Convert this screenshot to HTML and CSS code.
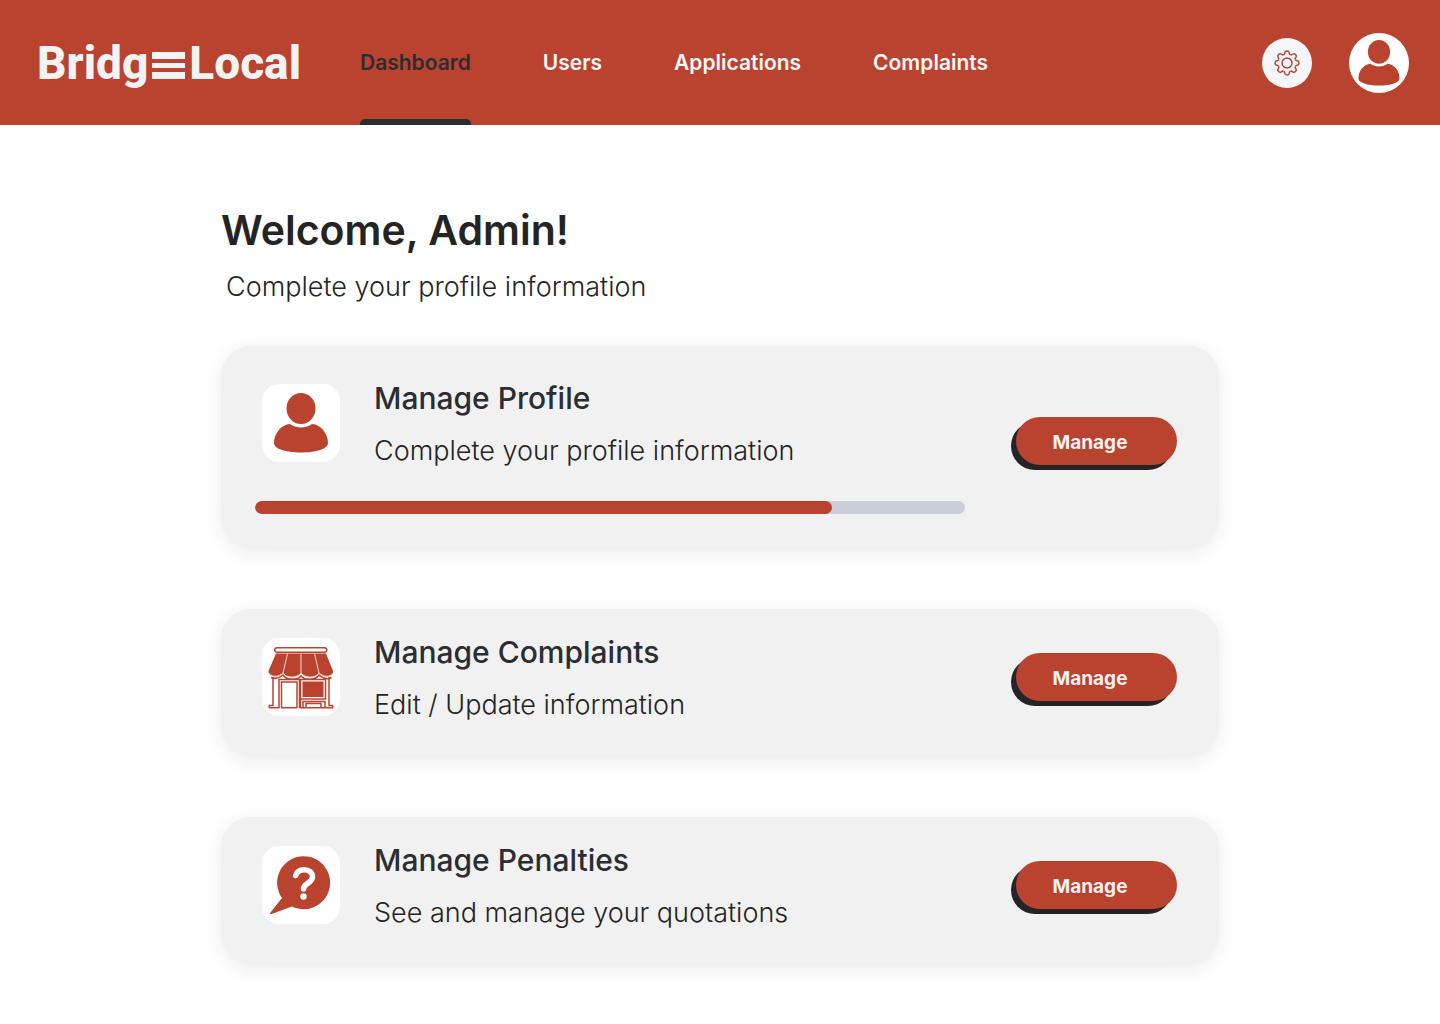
FILE: index.html
```html
<!DOCTYPE html>
<html lang="en">
<head>
  <meta charset="utf-8">
  <meta name="viewport" content="width=device-width, initial-scale=1">
  <title>BridgeLocal – Admin dashboard</title>
  <link rel="stylesheet" href="styles.css">
</head>
<body>
  <svg width="0" height="0" class="sprite" aria-hidden="true">
    <symbol id="person" viewBox="0 0 54 60">
      <ellipse cx="27" cy="15.500" rx="14.500" ry="15.500"/>
      <path d="M16 31C7 31.500 0 41 0 50c0 6 12 9.500 27 9.500S54 56 54 50c0-9-7-18.500-16-19-3 2.300-7 3.500-11 3.500S19 33.300 16 31z"/>
    </symbol>
  </svg>

  <header class="topbar">
    <a class="logo" href="#" aria-label="BridgeLocal home">
      <span>Bridg</span>
      <svg class="logo-bars" viewBox="0 0 33 27" aria-hidden="true"><path d="M0 0h33v7H0zM0 11h33v5H0zM0 20h33v7H0z"/></svg>
      <span>Local</span>
    </a>
    <nav class="nav" aria-label="Main">
      <a class="nav-link active" href="#" aria-current="page">Dashboard</a>
      <a class="nav-link" href="#">Users</a>
      <a class="nav-link" href="#">Applications</a>
      <a class="nav-link" href="#">Complaints</a>
    </nav>
    <div class="actions">
      <button class="settings" type="button" aria-label="Settings">
        <svg viewBox="-13 -13 26 26" aria-hidden="true">
          <circle r="5"/>
          <path id="tooth" d="M-3.440-8.310C-2.100-8.800-2.300-9.600-2.200-10.500Q-2-12 0-12T2.200-10.500C2.300-9.600 2.100-8.800 3.440-8.310"/>
          <use href="#tooth" transform="rotate(45)"/>
          <use href="#tooth" transform="rotate(90)"/>
          <use href="#tooth" transform="rotate(135)"/>
          <use href="#tooth" transform="rotate(180)"/>
          <use href="#tooth" transform="rotate(225)"/>
          <use href="#tooth" transform="rotate(270)"/>
          <use href="#tooth" transform="rotate(315)"/>
        </svg>
      </button>
      <button class="avatar" type="button" aria-label="Account">
        <svg viewBox="0 0 54 60" aria-hidden="true"><use href="#person"/></svg>
      </button>
    </div>
  </header>

  <main class="content">
    <h1>Welcome, Admin!</h1>
    <p class="lead">Complete your profile information</p>

    <section class="card card-tall">
      <div class="card-main">
        <div class="card-row">
          <div class="tile"><svg class="icon-person" viewBox="0 0 54 60" aria-hidden="true"><use href="#person"/></svg></div>
          <div class="text">
            <h2>Manage Profile</h2>
            <p>Complete your profile information</p>
          </div>
        </div>
        <progress class="meter" value="577" max="710" aria-label="Profile completion"></progress>
      </div>
      <button class="manage" type="button">Manage</button>
    </section>

    <section class="card">
      <div class="card-main">
        <div class="card-row">
          <div class="tile">
            <svg class="icon-full" viewBox="0 0 78 78" aria-hidden="true">
              <g fill="none" stroke="#ba4330" stroke-width="1.500">
                <rect x="12.750" y="9.750" width="52" height="4.500" rx="2.250"/>
                <path d="M11 39v28.500H7.500q-1 1.200 0 2.200H17V41.500h20.500V70M41 69.700h29.500q1-1 0-2.200H67V39"/>
                <rect x="19.500" y="44" width="15.500" height="25.700"/>
                <path d="M38.500 41.500h25v19.500h-25zM38.500 61v8.700H41V63.500h22v6M44 70v-4.500h15V70"/>
                <path d="M9 39.500c4 1.700 8.500.5 12-2.500 3 5 14 6 18 1 4 5 15 4 18-1 4 3.500 9 4.500 12.500 2.500"/>
              </g>
              <g fill="#ba4330">
                <path d="M14 15.500h50l7 17.500c.8 5.500-8.500 8-14 2-3.500 5-14 5.500-18 0-4 5.500-14.500 5-18 0-5.500 6-14.800 3.500-14.500-2z"/>
                <rect x="40.500" y="43.500" width="21" height="15.500"/>
              </g>
              <path d="M25.500 15.500L21 35c3 5.500 14.500 5.500 18 0V15.500M39 35c3.500 5.500 15 5.500 18 0l-4.500-19.500M7 35.500c3 4 10 3.500 14-.5M57 35c4 4 11 4.500 14 .5" fill="none" stroke="#f6d9d4"/>
            </svg>
          </div>
          <div class="text">
            <h2>Manage Complaints</h2>
            <p>Edit / Update information</p>
          </div>
        </div>
      </div>
      <button class="manage" type="button">Manage</button>
    </section>

    <section class="card">
      <div class="card-main">
        <div class="card-row">
          <div class="tile">
            <svg class="icon-full" viewBox="0 0 78 78" aria-hidden="true">
              <path fill="#ba4330" d="M20 52A26.500 26.500 0 1 1 30 60.500L9.500 68q-2.500.5-1-1.500z"/>
              <path d="M33.700 29.500C35 25 38.500 23.700 42 23.700c5 0 8.500 2.800 8.500 7.300 0 6.300-9 6-9 12" fill="none" stroke="#fff" stroke-width="5.500" stroke-linecap="round"/>
              <circle cx="41.500" cy="50.500" r="3.200" fill="#fff"/>
            </svg>
          </div>
          <div class="text">
            <h2>Manage Penalties</h2>
            <p>See and manage your quotations</p>
          </div>
        </div>
      </div>
      <button class="manage" type="button">Manage</button>
    </section>
  </main>
</body>
</html>
```
FILE: styles.css
```css
:root {
  --brand: #ba4330;
  --ink: #242424;
  --slate: #2b2d33;
  --surface: #f1f1f1;
}

* { box-sizing: border-box; }

body {
  margin: 0;
  background: #fff;
  color: var(--ink);
  font-family: Inter, "Liberation Sans", sans-serif;
}

h1, h2, p { margin: 0; }

button {
  border: 0;
  padding: 0;
  font-family: inherit;
  cursor: pointer;
}

.sprite { display: block; }

.topbar {
  display: flex;
  align-items: center;
  height: 125px;
  padding: 0 31px 0 37px;
  background: var(--brand);
}

.logo {
  display: flex;
  align-items: center;
  gap: 4px;
  width: 323px;
  color: #f3f3f3;
  font: 800 46px/60px Roboto, "Liberation Sans", sans-serif;
  text-decoration: none;
}

.logo-bars {
  width: 33px;
  height: 27px;
  margin-top: 6px;
  fill: #f3f3f3;
}

.nav {
  display: flex;
  align-self: stretch;
  gap: 72px;
}

.nav-link {
  display: flex;
  align-items: center;
  color: #f6f6f8;
  font-size: 21px;
  font-weight: 600;
  text-decoration: none;
}

.nav-link.active {
  position: relative;
  color: var(--slate);
}

.nav-link.active::after {
  content: "";
  position: absolute;
  inset: auto 0 0;
  height: 6px;
  border-radius: 5px 5px 0 0;
  background: var(--slate);
}

.actions {
  display: flex;
  align-items: center;
  gap: 37px;
  margin-left: auto;
}

.settings,
.avatar {
  display: grid;
  place-items: center;
  border-radius: 50%;
}

.settings {
  width: 50px;
  height: 50px;
  background: #f5f6fa;
}

.settings svg {
  width: 26px;
  height: 26px;
  fill: none;
  stroke: var(--brand);
  stroke-width: 1.500;
}

.avatar {
  width: 60px;
  height: 60px;
  background: #fff;
}

.avatar svg {
  width: 42px;
  height: 46px;
  fill: var(--brand);
}

.content {
  max-width: 998px;
  margin: 0 auto;
  padding: 80px 0 59px;
}

h1 {
  font-size: 41px;
  font-weight: 600;
  line-height: 50px;
}

.lead,
.text p {
  font-size: 27px;
  font-weight: 300;
  line-height: 36px;
}

.lead {
  margin: 14px 0 41px;
  padding-left: 5px;
}

.card {
  display: flex;
  align-items: flex-start;
  justify-content: space-between;
  margin-bottom: 60px;
  padding: 29px 42px 41px 34px;
  border-radius: 30px;
  background: var(--surface);
  box-shadow: 0 4px 20px rgba(0, 0, 0, 0.08);
}

.card:last-child { margin-bottom: 0; }

.card-tall { padding: 38px 42px 35px 34px; }

.card-main {
  flex: 0 1 710px;
}

.card-row {
  display: flex;
  gap: 34px;
  padding-left: 7px;
}

.tile {
  display: grid;
  flex: none;
  place-items: center;
  width: 78px;
  height: 78px;
  border-radius: 17px;
  background: #fff;
}

.icon-person {
  width: 54px;
  height: 60px;
  fill: var(--brand);
}

.icon-full {
  width: 78px;
  height: 78px;
}

.text {
  margin: -4px 0 -7px;
}

h2 {
  margin-bottom: 17px;
  color: var(--slate);
  font-size: 30px;
  font-weight: 500;
  line-height: 36px;
}

.meter {
  display: block;
  width: 100%;
  height: 13px;
  margin-top: 39px;
  border: 0;
  border-radius: 7px;
  overflow: hidden;
  background: #cacedb;
  appearance: none;
}

.meter::-webkit-progress-bar { background: #cacedb; }

.meter::-webkit-progress-value {
  border-radius: 7px;
  background: var(--brand);
}

.manage {
  flex: none;
  width: 161px;
  height: 48px;
  margin-top: 15px;
  padding: 2px 13px 0 0;
  border-radius: 24px;
  background: var(--brand);
  box-shadow: -5px 5px 0 var(--ink);
  color: #f1f1f1;
  font-size: 19px;
  font-weight: 700;
}

.card-tall .manage { margin-top: 33px; }
```
